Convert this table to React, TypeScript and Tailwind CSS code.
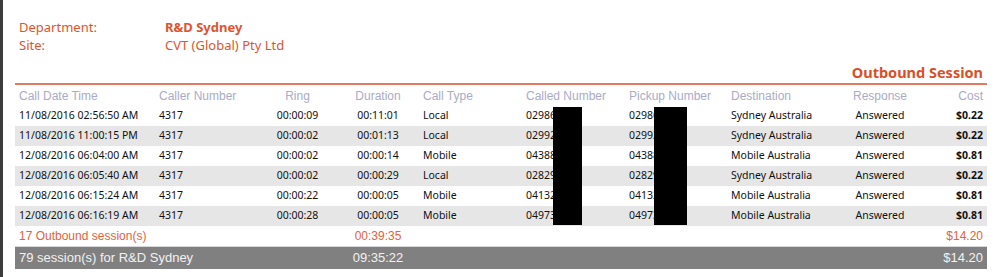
import React from "react";

const cols = "grid grid-cols-[140px_103px_79px_82px_103px_103px_102px_105px_96px_59px]";

const rows = [
  ["11/08/2016 02:56:50 AM", "4317", "00:00:09", "00:11:01", "Local", "02986", "02986", "Sydney Australia", "Answered", "$0.22"],
  ["11/08/2016 11:00:15 PM", "4317", "00:00:02", "00:01:13", "Local", "02992", "02992", "Sydney Australia", "Answered", "$0.22"],
  ["12/08/2016 06:04:00 AM", "4317", "00:00:02", "00:00:14", "Mobile", "04388", "04388", "Mobile Australia", "Answered", "$0.81"],
  ["12/08/2016 06:05:40 AM", "4317", "00:00:02", "00:00:29", "Local", "02829", "02829", "Sydney Australia", "Answered", "$0.22"],
  ["12/08/2016 06:15:24 AM", "4317", "00:00:22", "00:00:05", "Mobile", "04132", "04132", "Mobile Australia", "Answered", "$0.81"],
  ["12/08/2016 06:16:19 AM", "4317", "00:00:28", "00:00:05", "Mobile", "04973", "04973", "Mobile Australia", "Answered", "$0.81"],
];

const align = ["text-left pl-1", "text-left pl-1", "text-center", "text-center", "text-left pl-1", "text-left pl-1", "text-left pl-1", "text-left pl-1", "text-center", "text-right pr-1"];

export default function App() {
  return (
    <div className="w-[1000px] h-[277px] bg-white flex overflow-hidden">
      <div className="w-[3px] h-full bg-[#3c3c3c]" />
      <div className="flex-1 pl-[12px]">
        <div className="pt-[18px] font-['Noto_Sans',sans-serif] text-[13px] leading-[18px] text-[#e2532d]">
          <div className="flex">
            <div className="w-[150px] pl-[4px]">Department:</div>
            <div className="font-bold">R&amp;D Sydney</div>
          </div>
          <div className="flex">
            <div className="w-[150px] pl-[4px]">Site:</div>
            <div>CVT (Global) Pty Ltd</div>
          </div>
        </div>
        <div className="w-[972px] mt-[8px]">
          <div className="text-right pr-[4px] font-['Noto_Sans',sans-serif] font-bold text-[14.5px] leading-[20px] text-[#d94f28]">
            Outbound Session
          </div>
          <div className="h-[2px] bg-[#e27a62] mt-[1px]" />
          <div className={`${cols} h-[21px] items-center font-['Liberation_Sans',Arial,sans-serif] text-[12px] text-[#a9abc9]`}>
            {["Call Date Time", "Caller Number", "Ring", "Duration", "Call Type", "Called Number", "Pickup Number", "Destination", "Response", "Cost"].map((h, i) => (
              <div key={h} className={align[i]}>{h}</div>
            ))}
          </div>
          <div className="relative">
            {rows.map((r, ri) => (
              <div key={ri} className={`${cols} h-[20px] items-center font-['Noto_Sans',sans-serif] text-[10.5px] text-[#111] ${ri % 2 === 1 ? "bg-[#e6e6e6]" : "bg-white"}`}>
                {r.map((c, ci) => (
                  <div key={ci} className={`${align[ci]} ${ci === 9 ? "font-bold" : ""}`}>{c}</div>
                ))}
              </div>
            ))}
            <div className="absolute top-[1px] left-[538px] w-[29px] h-[118px] bg-black" />
            <div className="absolute top-[1px] left-[639px] w-[33px] h-[118px] bg-black" />
          </div>
          <div className={`${cols} h-[21px] items-center font-['Liberation_Sans',Arial,sans-serif] text-[12px] text-[#e8603c] border-b border-[#d8d8d8]`}>
            <div className="col-span-3 pl-1">17 Outbound session(s)</div>
            <div className="text-center">00:39:35</div>
            <div className="col-span-5" />
            <div className="text-right pr-1">$14.20</div>
          </div>
          <div className={`${cols} h-[22px] items-center bg-[#808080] font-['Liberation_Sans',Arial,sans-serif] text-[13px] text-[#f2f2f2]`}>
            <div className="col-span-3 pl-1">79 session(s) for R&amp;D Sydney</div>
            <div className="text-center">09:35:22</div>
            <div className="col-span-5" />
            <div className="text-right pr-1">$14.20</div>
          </div>
        </div>
      </div>
    </div>
  );
}
